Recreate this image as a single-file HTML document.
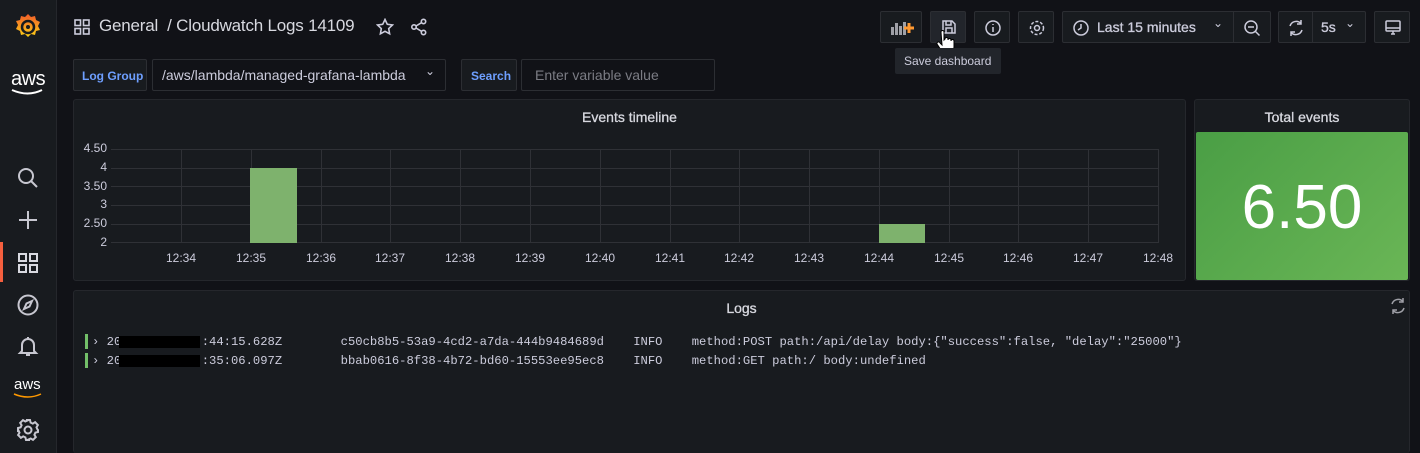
<!DOCTYPE html>
<html style="overflow:hidden;height:453px"><head><meta charset="utf-8"><style>
*{box-sizing:border-box;margin:0;padding:0}
body{width:1420px;height:453px;background:#111217;font-family:"Liberation Sans",sans-serif;color:#ccccdc;position:relative;overflow:hidden}
.a{position:absolute}
.side{left:0;top:0;width:57px;height:453px;background:#181b1f;border-right:1px solid #25272c}
.btn{position:absolute;top:11px;height:32px;background:#181b1f;border:1px solid #2c2e33;border-radius:2px}
.panel{position:absolute;background:#181b1f;border:1px solid #25272c;border-radius:3px}
.title{position:absolute;font-size:14px;color:#d8d9e0;text-align:center;width:100%;-webkit-text-stroke:0.3px #d8d9e0}
.yl{position:absolute;right:0;font-size:12px;color:#ccccdc;text-align:right}
.xl{position:absolute;font-size:12px;color:#ccccdc;transform:translateX(-50%)}
.mono{font-family:"Liberation Mono",monospace;font-size:12.2px;color:#ccccdc;position:absolute;white-space:pre}
svg{display:block}
</style></head><body>
<div class="a side"></div>
<div class="a" style="left:0;top:242px;width:3px;height:40px;background:#f55f3e"></div>
<svg class="a" style="left:13px;top:12px" width="30" height="30" viewBox="0 0 30 30"><defs><linearGradient id="g" x1="0" y1="1" x2="0" y2="0"><stop offset="0" stop-color="#fcd116"/><stop offset="1" stop-color="#f15b2a"/></linearGradient></defs><path d="M15 2l3 3 4-1 1 4 4 2-2 4 2 4-4 1-1 4-4-1-3 3-3-3-4 1-1-4-4-2 2-4-2-4 4-1 1-4 4 1z" fill="url(#g)"/><circle cx="15" cy="15" r="6" fill="none" stroke="#181b1f" stroke-width="2.5"/><circle cx="15" cy="15" r="2" fill="#181b1f"/></svg>
<div class="a" style="left:11px;top:68px;font-size:20px;color:#fff;letter-spacing:-0.5px">aws</div>
<svg class="a" style="left:10px;top:88px" width="36" height="8"><path d="M2 2q16 7 30 0" stroke="#fff" stroke-width="2" fill="none"/></svg>
<svg class="a" style="left:16px;top:166px" width="24" height="24" fill="none" stroke="#c7c7d0" stroke-width="2"><circle cx="10" cy="10" r="7"/><path d="M15 15l6 6"/></svg>
<svg class="a" style="left:17px;top:209px" width="22" height="22" stroke="#c7c7d0" stroke-width="2"><path d="M11 2v18M2 11h18"/></svg>
<svg class="a" style="left:17px;top:252px" width="22" height="22" fill="none" stroke="#d8d9e0" stroke-width="2"><rect x="2" y="2" width="7" height="7"/><rect x="13" y="2" width="7" height="7"/><rect x="2" y="13" width="7" height="7"/><rect x="13" y="13" width="7" height="7"/></svg>
<svg class="a" style="left:16px;top:293px" width="24" height="24" fill="none" stroke="#c7c7d0" stroke-width="2"><circle cx="12" cy="12" r="9.5"/><path d="M16 8l-2.5 5.5L8 16l2.5-5.5z"/></svg>
<svg class="a" style="left:17px;top:335px" width="22" height="22" fill="none" stroke="#c7c7d0" stroke-width="2"><path d="M5 16V10a6 6 0 0112 0v6l2 2H3zM9 20h4M11 2v2"/></svg>
<div class="a" style="left:14px;top:376px;font-size:15px;color:#fff">aws</div>
<svg class="a" style="left:12px;top:392px" width="32" height="8"><path d="M2 2q14 6 27 0" stroke="#ff9900" stroke-width="1.5" fill="none"/></svg>
<svg class="a" style="left:16px;top:418px" width="24" height="24" fill="none" stroke="#c7c7d0" stroke-width="2"><circle cx="12" cy="12" r="3.5"/><path d="M10 2h4l.6 2.6 2.2 1 2.3-1.4 2.8 2.8-1.4 2.3 1 2.2L22 12v0l0 2-2.6.6-1 2.2 1.4 2.3-2.8 2.8-2.3-1.4-2.2 1L14 22h-4l-.6-2.6-2.2-1-2.3 1.4-2.8-2.8 1.4-2.3-1-2.2L2 14v-4l2.6-.6 1-2.2-1.4-2.3 2.8-2.8 2.3 1.4 2.2-1z"/></svg>

<svg class="a" style="left:74px;top:19px" width="16" height="16" fill="none" stroke="#ccccdc" stroke-width="1.6"><rect x="1" y="1" width="5.5" height="5.5"/><rect x="9.5" y="1" width="5.5" height="5.5"/><rect x="1" y="9.5" width="5.5" height="5.5"/><rect x="9.5" y="9.5" width="5.5" height="5.5"/></svg>
<div class="a" style="left:99px;top:16px;font-size:17px;color:#d8d9e0;white-space:nowrap;letter-spacing:-0.2px">General &nbsp;/ Cloudwatch Logs 14109</div>
<svg class="a" style="left:376px;top:18px" width="18" height="18" fill="none" stroke="#ccccdc" stroke-width="1.6"><path d="M9 1.5l2.3 4.8 5.2.7-3.8 3.6.9 5.2L9 13.3l-4.6 2.5.9-5.2L1.5 7l5.2-.7z"/></svg>
<svg class="a" style="left:410px;top:18px" width="18" height="18" fill="none" stroke="#ccccdc" stroke-width="1.6"><circle cx="13.5" cy="3.5" r="2.2"/><circle cx="4" cy="9" r="2.2"/><circle cx="13.5" cy="14.5" r="2.2"/><path d="M6 8l5.5-3.3M6 10l5.5 3.3"/></svg>

<div class="btn" style="left:880px;width:42px"><svg class="a" style="left:10px;top:8px" width="24" height="16"><rect x="0" y="7" width="3" height="8" fill="#9fa0a7"/><rect x="4" y="3" width="3" height="12" fill="#9fa0a7"/><rect x="8" y="6" width="3" height="9" fill="#9fa0a7"/><rect x="12" y="2" width="3" height="13" fill="#9fa0a7"/><path d="M18 3v10M13 8h10" stroke="#ff9830" stroke-width="3"/></svg></div>
<div class="btn" style="left:930px;width:36px;background:#22252b"><svg class="a" style="left:10px;top:7px" width="16" height="16" fill="none" stroke="#ccccdc" stroke-width="1.5"><path d="M2 2h9l3 3v9H2z M5 2v4h5V2 M5 14v-5h6v5"/></svg></div>
<svg class="a" style="left:934px;top:30px" width="22" height="26"><path d="M7 2a1.5 1.5 0 013 0v8l1-1a1.5 1.5 0 013 0v1a1.5 1.5 0 013 0v1a1.5 1.5 0 013 0v6c0 3-2 6-5 6h-4c-2 0-3-1-4-3l-4-6a1.5 1.5 0 013-1l2 2z" fill="#fff" stroke="#000" stroke-width="1"/></svg>
<div class="btn" style="left:974px;width:36px"><svg class="a" style="left:9px;top:7px" width="18" height="18" fill="none" stroke="#ccccdc" stroke-width="1.5"><circle cx="9" cy="9" r="7"/><path d="M9 8v5M9 5v1"/></svg></div>
<div class="btn" style="left:1018px;width:36px"><svg class="a" style="left:9px;top:7px" width="18" height="18" fill="none" stroke="#ccccdc" stroke-width="1.5"><circle cx="9" cy="9" r="2.5"/><circle cx="9" cy="9" r="6.5" stroke-dasharray="3 1.8"/></svg></div>
<div class="btn" style="left:1062px;width:209px"><svg class="a" style="left:9px;top:7px" width="18" height="18" fill="none" stroke="#ccccdc" stroke-width="1.5"><circle cx="9" cy="9" r="7"/><path d="M9 5v4l-3 2"/></svg><div class="a" style="left:34px;top:7px;font-size:14px;color:#ccccdc;-webkit-text-stroke:0.3px #ccccdc">Last 15 minutes</div><div class="a" style="left:150px;top:4px;font-size:12px;color:#ccccdc">&#8964;</div><div class="a" style="left:170px;top:0;width:1px;height:30px;background:#2c2e33"></div><svg class="a" style="left:180px;top:7px" width="18" height="18" fill="none" stroke="#ccccdc" stroke-width="1.5"><circle cx="8" cy="8" r="6"/><path d="M12.5 12.5l4 4M5 8h6"/></svg></div>
<div class="btn" style="left:1278px;width:88px"><svg class="a" style="left:8px;top:7px" width="18" height="18" fill="none" stroke="#ccccdc" stroke-width="1.5"><path d="M3 7a6.5 6.5 0 0111-2.5M15 11a6.5 6.5 0 01-11 2.5M14 1v4h-4M4 17v-4h4"/></svg><div class="a" style="left:33px;top:0;width:1px;height:30px;background:#2c2e33"></div><div class="a" style="left:42px;top:7px;font-size:14px;-webkit-text-stroke:0.3px #ccccdc">5s</div><div class="a" style="left:66px;top:4px;font-size:12px">&#8964;</div></div>
<div class="btn" style="left:1374px;width:36px"><svg class="a" style="left:9px;top:7px" width="18" height="18" fill="none" stroke="#ccccdc" stroke-width="1.5"><rect x="2" y="2" width="14" height="10" rx="1"/><path d="M2 9h14M7 15h4M9 12v3"/></svg></div>
<div class="a" style="left:895px;top:48px;width:106px;height:26px;background:#22252b;border-radius:2px;font-size:12px;color:#ccccdc;padding:6px 0 0 9px">Save dashboard</div>

<div class="a" style="left:73px;top:59px;width:74px;height:32px;background:#181b1f;border:1px solid #2c2e33;border-radius:2px;color:#6e9fff;font-size:12px;font-weight:bold;padding:9px 0 0 8px">Log Group</div>
<div class="a" style="left:152px;top:59px;width:294px;height:32px;border:1px solid #2c2e33;border-radius:2px;color:#ccccdc;font-size:14px;padding:7px 0 0 9px">/aws/lambda/managed-grafana-lambda<span style="position:absolute;left:272px;top:4px;font-size:12px">&#8964;</span></div>
<div class="a" style="left:461px;top:59px;width:56px;height:32px;background:#181b1f;border:1px solid #2c2e33;border-radius:2px;color:#6e9fff;font-size:12px;font-weight:bold;padding:9px 0 0 9px">Search</div>
<div class="a" style="left:521px;top:59px;width:194px;height:32px;background:#111217;border:1px solid #2c2e33;border-radius:2px;color:#7b7c84;font-size:14px;padding:7px 0 0 13px">Enter variable value</div>

<div class="panel" style="left:73px;top:99px;width:1113px;height:182px">
<div class="title" style="top:9px">Events timeline</div>
</div>
<svg class="a" style="left:111px;top:140px" width="1060" height="110">
<g stroke="#2f3136" stroke-width="1">
<path d="M0 9.5H1047M0 28.5H1047M0 46.5H1047M0 65.5H1047M0 84.5H1047M0 102.5H1047"/>
<path d="M70.5 9V103M140.5 9V103M210.5 9V103M279.5 9V103M349.5 9V103M419.5 9V103M489.5 9V103M559.5 9V103M628.5 9V103M698.5 9V103M768.5 9V103M838.5 9V103M907.5 9V103M977.5 9V103M1047.5 9V103"/>
</g>
<rect x="139" y="28" width="47" height="75" fill="#7eb26d"/>
<rect x="768" y="84" width="46" height="19" fill="#7eb26d"/>
</svg>
<div class="a" style="left:75px;top:141px;width:32px;height:110px">
<div class="yl" style="top:0">4.50</div><div class="yl" style="top:19px">4</div><div class="yl" style="top:38px">3.50</div><div class="yl" style="top:56px">3</div><div class="yl" style="top:75px">2.50</div><div class="yl" style="top:94px">2</div>
</div>
<div class="a" style="top:251px;left:0">
<div class="xl" style="left:181px">12:34</div><div class="xl" style="left:251px">12:35</div><div class="xl" style="left:321px">12:36</div><div class="xl" style="left:390px">12:37</div><div class="xl" style="left:460px">12:38</div><div class="xl" style="left:530px">12:39</div><div class="xl" style="left:600px">12:40</div><div class="xl" style="left:670px">12:41</div><div class="xl" style="left:739px">12:42</div><div class="xl" style="left:809px">12:43</div><div class="xl" style="left:879px">12:44</div><div class="xl" style="left:949px">12:45</div><div class="xl" style="left:1018px">12:46</div><div class="xl" style="left:1088px">12:47</div><div class="xl" style="left:1158px">12:48</div>
</div>

<div class="panel" style="left:1194px;top:99px;width:216px;height:182px">
<div class="title" style="top:9px">Total events</div>
<div class="a" style="left:1px;top:32px;width:212px;height:148px;border-radius:2px;background:linear-gradient(135deg,#4a9e45,#6ab656)"></div>
<div class="a" style="left:0;top:72px;width:214px;text-align:center;font-size:62px;color:#fff">6.50</div>
</div>

<div class="panel" style="left:73px;top:290px;width:1337px;height:163px;border-bottom:none">
<div class="title" style="top:9px">Logs</div>
<svg class="a" style="left:1315px;top:6px" width="18" height="18" fill="none" stroke="#9fa0a7" stroke-width="1.5"><path d="M3 7a6.5 6.5 0 0111-2.5M15 11a6.5 6.5 0 01-11 2.5M14 1v4h-4M4 17v-4h4"/></svg>
</div>
<div class="a" style="left:85px;top:334px;width:3px;height:15px;background:#73bf69"></div>
<div class="a" style="left:85px;top:353px;width:3px;height:15px;background:#73bf69"></div>
<div class="mono" style="left:92px;top:335px">› 20           :44:15.628Z        c50cb8b5-53a9-4cd2-a7da-444b9484689d    INFO    method:POST path:/api/delay body:{"success":false, "delay":"25000"}</div>
<div class="mono" style="left:92px;top:354px">› 20           :35:06.097Z        bbab0616-8f38-4b72-bd60-15553ee95ec8    INFO    method:GET path:/ body:undefined</div>
<div class="a" style="left:119px;top:336px;width:81px;height:12px;background:#000"></div>
<div class="a" style="left:119px;top:355px;width:81px;height:12px;background:#000"></div>
</body></html>
